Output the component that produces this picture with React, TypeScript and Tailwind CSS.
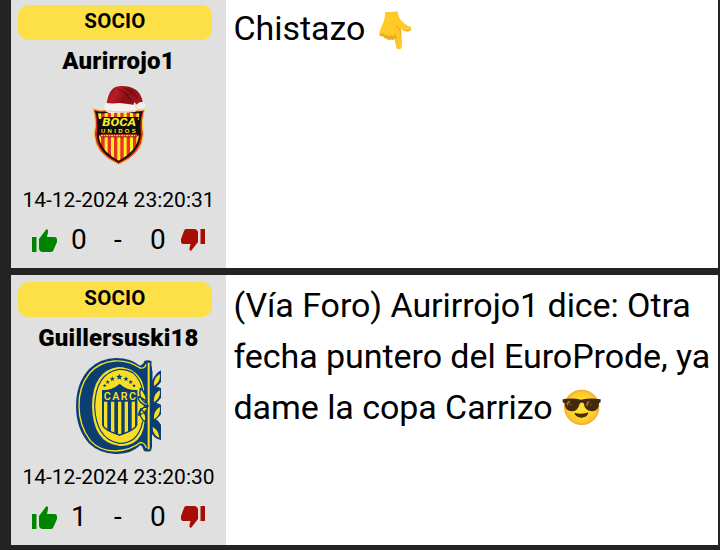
import type { ReactNode } from "react";

function Star({ x, y, r }: { x: number; y: number; r: number }) {
  const points = Array.from({ length: 10 }, (_, i) => {
    const d = i % 2 ? r * 0.42 : r;
    const a = -Math.PI / 2 + (i * Math.PI) / 5;
    return `${x + d * Math.cos(a)},${y + d * Math.sin(a)}`;
  }).join(" ");
  return <polygon points={points} fill="#0b3f73" />;
}

function BocaUnidosCrest() {
  return (
    <svg viewBox="60 27 171 243" className="h-[81px] w-[57px]">
      <defs>
        <linearGradient id="santa-hat" x1="0" y1="0" x2="1" y2="0.4">
          <stop offset="0" stopColor="#7d1016" />
          <stop offset=".35" stopColor="#b81c26" />
          <stop offset=".65" stopColor="#8b0f17" />
          <stop offset="1" stopColor="#a3151e" />
        </linearGradient>
        <clipPath id="boca-stripes">
          <path d="M84 115Q104 118 120 110H172Q190 118 209 115Q202 145 206 184Q201 228 146 257Q91 228 87 184Q91 145 84 115Z" />
        </clipPath>
      </defs>
      <path d="M69 101Q90 111 115 103H177Q200 111 225 101Q213 134 220 178Q217 238 146 268Q76 238 73 178Q81 134 69 101Z" fill="#e8281f" stroke="#f4cf35" strokeWidth="3" />
      <path d="M75 108Q98 114 118 107H174Q196 114 218 108Q208 138 213 180Q208 234 146 263Q84 234 80 180Q86 138 75 108Z" fill="#171006" />
      <g clipPath="url(#boca-stripes)">
        <rect x="60" y="100" width="171" height="170" fill="#e8322b" />
        {[84, 104, 123, 142, 161, 180, 199].map((x) => (
          <rect key={x} x={x} y="100" width="9" height="170" fill="#ffed22" />
        ))}
      </g>
      <path d="M84 132H92L98 126H207L202 134H210V181H205L199 187H94L88 181H84Z" fill="#110e08" />
      <text x="97" y="152" textLength="101" lengthAdjust="spacingAndGlyphs" fill="#f6ed23" fontFamily="Roboto, sans-serif" fontSize="30" fontWeight="800" fontStyle="italic">BOCA</text>
      <text x="93" y="173" textLength="104" lengthAdjust="spacing" fill="#f6ed23" fontFamily="Liberation Sans, sans-serif" fontSize="18" fontWeight="700">UNIDOS</text>
      <path d="M91 178H201V185H91Z" fill="#d83722" />
      <path d="M93 182H199" stroke="#f2db29" strokeWidth="4" strokeDasharray="6 3 3 3" />
      <path d="M109 88C114 68 118 37 146 34C176 29 207 43 214 66Q219 76 218 87L199 88L193 81L189 94Z" fill="url(#santa-hat)" />
      <path d="M146 43Q173 54 186 82M160 39Q185 44 203 70" fill="none" stroke="#570b13" strokeWidth="5" opacity=".55" />
      <path d="M106 83Q122 87 149 84Q176 87 194 90Q200 100 196 111Q168 114 141 113Q112 118 105 106Q100 91 106 83Z" fill="#f5f0ee" />
      <path d="M108 107Q145 114 193 108" fill="none" stroke="#bcb3b1" strokeWidth="4" opacity=".5" />
      <circle cx="214" cy="94" r="13" fill="#f3eeec" />
      <path d="M205 103Q217 108 224 98" fill="none" stroke="#bcb3b1" strokeWidth="3" opacity=".6" />
    </svg>
  );
}

function CentralCrest() {
  return (
    <svg viewBox="48 24 255 288" className="h-24 w-[85px]">
      <defs>
        <clipPath id="carc-shield">
          <path d="M126 121Q154 124 179 103Q202 124 232 121V225Q224 242 179 257Q133 242 126 225Z" />
        </clipPath>
      </defs>
      <path d="M168 24Q214 25 240 47Q251 43 253 33Q265 28 275 34Q273 45 276 53V93Q287 68 303 61V96Q296 105 289 110Q297 111 303 114V143Q296 153 289 158Q297 161 303 164V193Q295 203 288 208Q297 213 303 224V270Q286 268 276 252V291L273 302Q264 307 252 303Q249 290 242 285Q213 313 166 312Q117 309 88 281Q48 238 48 168Q48 98 88 56Q121 25 168 24Z" fill="#0b3f73" />
      <path d="M258 43Q254 57 240 54Q207 31 164 33Q119 36 89 69Q56 110 57 168Q57 227 91 272Q119 303 166 303Q210 302 242 277Q255 279 259 294" fill="none" stroke="#f5df2b" strokeWidth="4" />
      <path d="M266 38V298" fill="none" stroke="#f5df2b" strokeWidth="6" />
      <path d="M176 51Q226 53 246 94Q252 111 254 126V213Q250 263 218 280Q198 290 176 287Q99 278 96 168Q98 61 176 51Z" fill="#f8df25" />
      <path d="M248 120Q240 87 221 70Q202 57 177 58Q107 69 104 168Q107 267 177 280Q202 281 221 267Q242 248 248 214" fill="none" stroke="#0b3f73" strokeWidth="3.5" />
      <path d="M254 120V216" stroke="#0b3f73" strokeWidth="6" />
      {[[134, 107, 6], [143, 96, 7], [157, 87, 8], [178, 81, 10], [198, 87, 8], [212, 96, 7], [222, 107, 6]].map(([x, y, r]) => <Star key={x} x={x} y={y} r={r} />)}
      <g clipPath="url(#carc-shield)">
        <rect x="124" y="100" width="110" height="160" fill="#0b3f73" />
        {[132, 153, 174, 194, 215].map((x) => <rect key={x} x={x} y="155" width="10" height="98" fill="#f8df25" />)}
      </g>
      <path d="M128 122Q154 124 179 104Q202 124 230 122V225Q224 241 179 255Q133 241 128 225Z" fill="none" stroke="#0b3f73" strokeWidth="4" />
      <text x="131" y="149" textLength="97" lengthAdjust="spacing" fill="#f8df25" fontFamily="Roboto, sans-serif" fontSize="32" fontWeight="600">CARC</text>
      <g fill="#f8df25" stroke="#0b3f73" strokeWidth="4" strokeLinejoin="round">
        <path d="M241 115Q234 142 256 159Q265 137 241 115ZM242 176Q234 200 256 216Q264 194 242 176ZM234 140Q236 162 264 168Q258 145 234 140ZM235 195Q238 174 264 168Q260 189 235 195Z" />
      </g>
      <g fill="#f8df25">
        <path d="M282 108Q279 85 299 72Q304 93 282 108ZM282 157Q279 134 299 121Q304 142 282 157ZM282 208Q279 184 299 171Q304 193 282 208ZM277 230Q297 240 298 264Q279 255 277 230Z" />
      </g>
      <path d="M275 62V252" fill="none" stroke="#0b3f73" strokeWidth="5" />
    </svg>
  );
}

function PointingDown() {
  return (
    <svg viewBox="59 28 97 115" className="mt-[8px] ml-[14px] h-[39px] w-[33px]">
      <path d="M77 30Q96 32 115 29Q114 42 121 52Q136 70 153 75Q157 82 151 86Q139 91 124 81L126 134Q125 141 118 141Q111 141 110 134L106 108Q101 116 94 111Q87 116 81 109Q73 110 71 102Q61 105 60 95Q63 78 68 70Q77 54 77 30Z" fill="#ffca28" />
      <path d="M60 94Q65 97 73 93Q76 102 82 97Q88 107 95 98Q101 107 109 93L110 134Q113 141 118 141Q110 142 109 132L106 108Q101 116 94 111Q87 116 81 109Q73 110 71 102Q61 105 60 94ZM106 65Q118 83 132 84Q144 87 154 80Q147 93 132 86L123 81L126 134Q122 107 120 86Q109 78 106 65Z" fill="#efac20" />
    </svg>
  );
}

function Sunglasses() {
  return (
    <svg viewBox="38 26 117 111" className="mt-[7px] ml-[9px] h-[37px] w-[39px]">
      <defs>
        <radialGradient id="smile-face">
          <stop offset=".4" stopColor="#ffdf30" />
          <stop offset=".85" stopColor="#fdc72e" />
          <stop offset="1" stopColor="#f3a52a" />
        </radialGradient>
      </defs>
      <circle cx="97" cy="81" r="53" fill="url(#smile-face)" />
      <path d="M40 57Q68 52 95 58Q125 52 154 57V66L149 68Q149 92 128 93Q107 93 103 69Q97 64 91 70Q86 93 66 93Q46 91 46 69L40 66Z" fill="#422b0d" />
      <path d="M75 97Q97 104 117 96Q117 111 97 112Q78 111 75 97Z" fill="#493006" />
      <path d="M51 70L56 62H63L54 78ZM62 74L66 67 65 77ZM110 72L115 63H121L113 79ZM122 75L126 67 125 77Z" fill="#a56c34" />
    </svg>
  );
}

function Thumb({ down = false }: { down?: boolean }) {
  return down ? (
    <svg viewBox="0 0 24 23" className="mt-[1px] h-[23px] w-6">
      <path d="M5 0H13Q16 0 17 3V13L10 22L8.5 21V19L9.5 15H2Q0 15 0 12V10L3 2Q3.5 0 5 0Z" fill="#a60e05" />
      <path d="M19.5 0H24V15H19.5Z" fill="#a60e05" />
    </svg>
  ) : (
    <svg viewBox="0 0 25 23" className="mt-[1px] h-[23px] w-[25px]">
      <path d="M0 8H4.5V23H0Z" fill="#008500" />
      <path d="M7 10L14.5 0L16 1V3L15 8H22.5Q25 8 25 11V13L21.5 21Q21 23 19 23H11Q7 23 7 19Z" fill="#008500" />
    </svg>
  );
}

type PostProps = { name: string; crest: ReactNode; date: string; likes: number; children: ReactNode };

function Post({ name, crest, date, likes, children }: PostProps) {
  return (
    <article className="flex h-[270px] w-[707px] shrink-0 bg-white">
      <aside className="flex w-[215px] shrink-0 flex-col items-center bg-[#e0e0e0] pt-[7px]">
        <div className="ml-[7px] flex h-[35px] w-[194px] shrink-0 items-center justify-center self-start rounded-[10px] bg-[#fde047] pb-[2px] text-[20.5px] font-bold tracking-[0.2px]">SOCIO</div>
        <div className="h-[41px] shrink-0 text-[24px] leading-[42px] font-black tracking-[0.2px]">{name}</div>
        <div className="flex h-[103px] shrink-0 items-start justify-center">{crest}</div>
        <div className="h-8 shrink-0 text-[21px] leading-8 whitespace-nowrap">{date}</div>
        <div className="flex h-[47px] w-full shrink-0 items-center pl-[21px] text-[28px] leading-[47px]">
          <Thumb />
          <span className="ml-[14px] w-[43px]">{likes}</span>
          <span className="w-9">-</span>
          <span className="w-[31px]">0</span>
          <Thumb down />
        </div>
      </aside>
      <div className="flex-1 pt-[5px] pl-[7.5px] text-[34px] leading-[51px] tracking-[-0.06px] whitespace-nowrap">{children}</div>
    </article>
  );
}

export default function App() {
  return (
    <main className="h-[550px] w-[720px] overflow-hidden bg-[#242323] pl-[11px] font-[Roboto,sans-serif] text-black">
      <div className="-mt-[2px] flex flex-col gap-[7px]">
        <Post name="Aurirrojo1" crest={<div className="pt-[3px]"><BocaUnidosCrest /></div>} date="14-12-2024 23:20:31" likes={0}>
          <div className="flex">Chistazo<PointingDown /></div>
        </Post>
        <Post name="Guillersuski18" crest={<CentralCrest />} date="14-12-2024 23:20:30" likes={1}>
          <div>(Vía Foro) Aurirrojo1 dice: Otra</div>
          <div>fecha puntero del EuroProde, ya</div>
          <div className="flex">dame la copa Carrizo<Sunglasses /></div>
        </Post>
      </div>
    </main>
  );
}
